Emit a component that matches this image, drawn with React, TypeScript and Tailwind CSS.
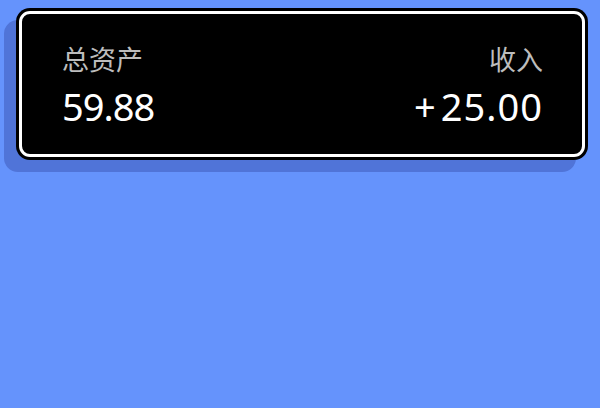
import React from "react";

const App: React.FC = () => {
  return (
    <div
      className="w-full h-[408px] bg-[#6593fc] pt-[8px] pl-[16px]"
      style={{ fontFamily: '"Noto Sans", "Noto Sans CJK SC", sans-serif' }}
    >
      <div className="w-[572px] h-[152px] rounded-[14px] bg-black p-[3px] shadow-[-12px_12px_0_#5074d8]">
        <div className="h-full rounded-[11px] border-[3px] border-white bg-black pl-[40px] pr-[39px] pt-[30px] flex justify-between">
          <div className="flex flex-col">
            <p className="text-[27px] leading-[32px] text-[#bdbdbd]">总资产</p>
            <p className="text-[38px] leading-[44px] text-white mt-[8px] tracking-[-1px]">59.88</p>
          </div>
          <div className="flex flex-col items-end">
            <p className="text-[27px] leading-[32px] text-[#bdbdbd]">收入</p>
            <p className="text-[38px] leading-[44px] text-white mt-[8px] tracking-[1px]">
              <span className="mr-[4px]">+</span>25.00
            </p>
          </div>
        </div>
      </div>
    </div>
  );
};

export default App;
